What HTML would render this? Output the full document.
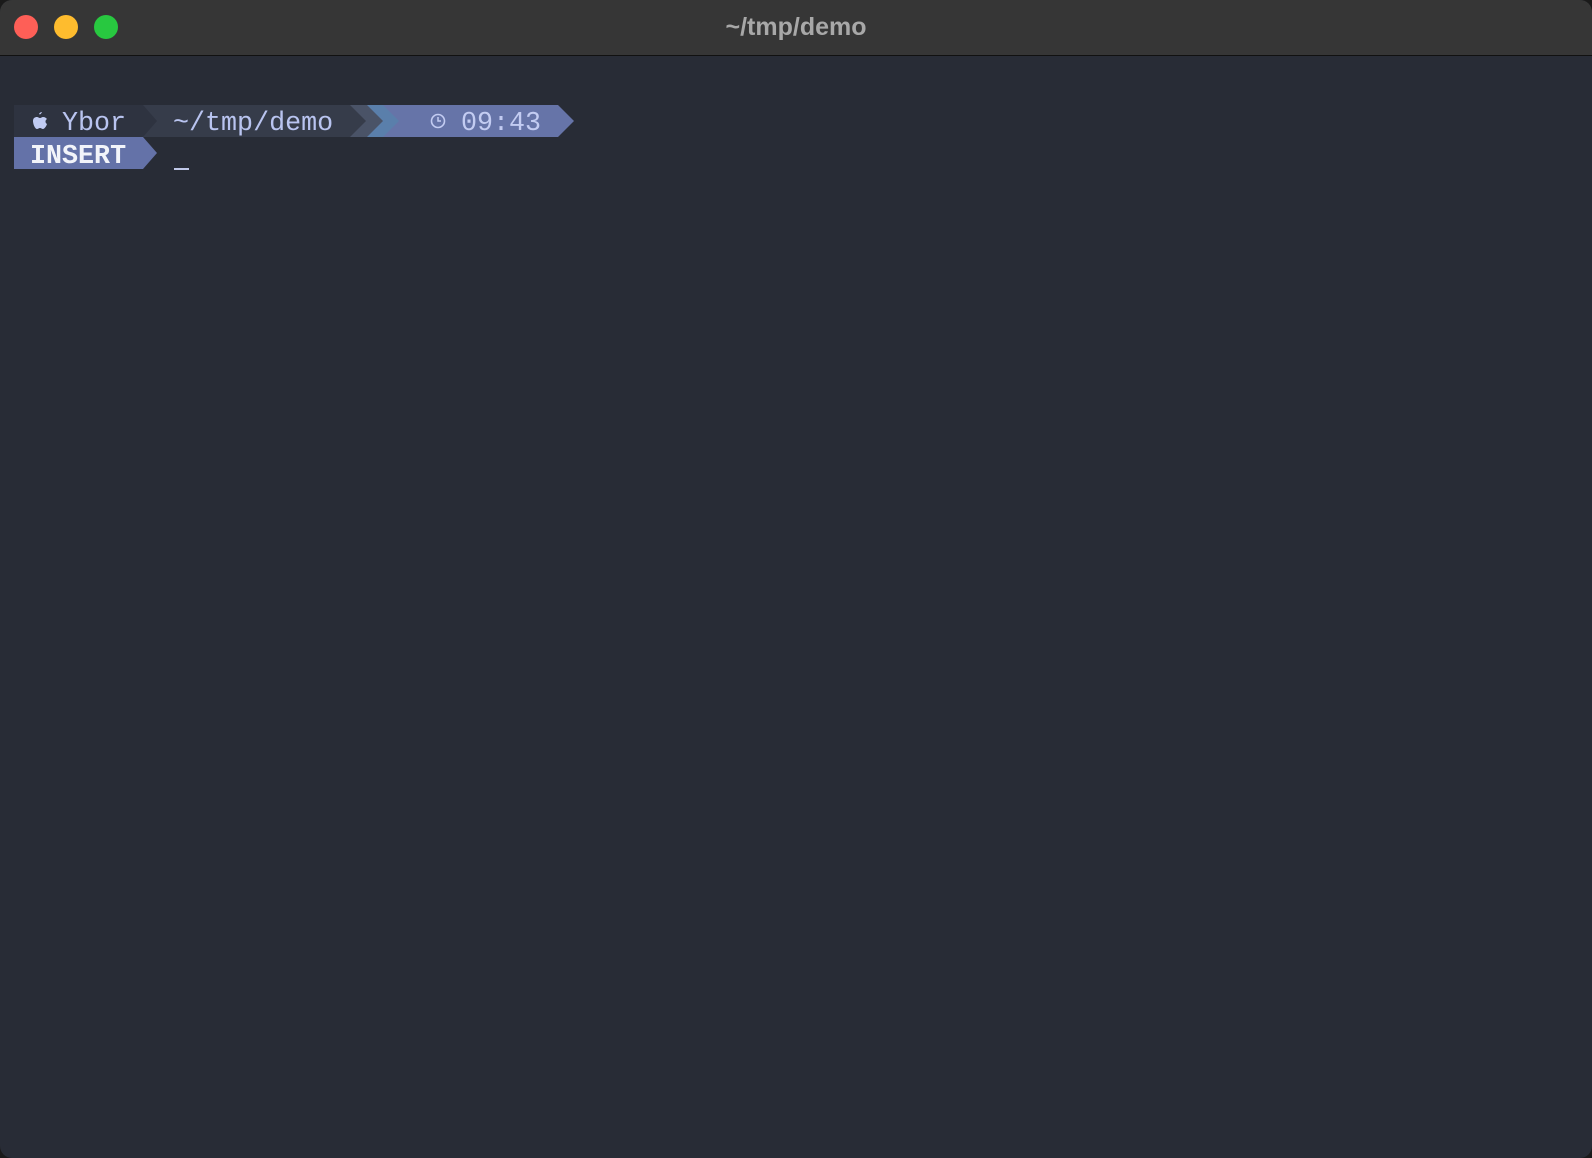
<!DOCTYPE html>
<html><head><meta charset="utf-8"><style>
html,body{margin:0;padding:0;background:#1a1a1a;width:1592px;height:1158px;overflow:hidden}
.win{position:absolute;left:0;top:0;width:1592px;height:1158px;border-radius:12px;overflow:hidden;background:#282c36}
.tb{position:absolute;left:0;top:0;width:1592px;height:55px;background:#363636;border-bottom:1px solid #111}
.dot{position:absolute;top:15px;width:24px;height:24px;border-radius:50%}
.title{position:absolute;top:0;left:0;width:1592px;text-align:center;color:#a8a8a8;font:bold 25px "Liberation Sans",sans-serif;line-height:55px}
svg{position:absolute;left:0;top:0}
.t{font-family:"Liberation Mono","DejaVu Sans Mono",monospace;font-size:26.7px}
</style></head><body><div class="win">
<div class="tb"><div class="dot" style="left:14px;background:#fe5f57"></div><div class="dot" style="left:54px;background:#febc2e"></div><div class="dot" style="left:94px;background:#28c840"></div>
<div class="title">~/tmp/demo</div></div>
<svg width="1592" height="1158">
<polygon points="383,105 558,105 574,121 558,137 383,137" fill="#6674a8"/>
<polygon points="360,105 383,105 399,121 383,137 360,137" fill="#5a7fab"/>
<polygon points="345,105 367,105 383,121 367,137 345,137" fill="#4a5367"/>
<polygon points="142,105 350,105 366,121 350,137 142,137" fill="#363c4a"/>
<polygon points="14,105 143,105 157,121 143,137 14,137" fill="#2e3340"/>
<polygon points="14,137 143,137 157,153 143,169 14,169" fill="#6472a8"/>
<path d="M39,114c1-2 3-2 3-2-1 2-2 3-3 2z M33,121c0-3 2-4 4-4 1 0 2 1 3 1s2-1 3-1c2 0 3 1 4 2-2 1-2 4 0 5-1 3-3 5-4 5s-2-1-3-1-2 1-3 1c-2 0-4-5-4-8z" fill="#c0cbf2"/>
<text class="t" x="62" y="130" fill="#b9c4f0">Ybor</text>
<text class="t" x="173" y="130" fill="#b9c4f0">~/tmp/demo</text>
<circle cx="438" cy="121" r="6.5" fill="none" stroke="#c3ccf2" stroke-width="1.6"/>
<path d="M438,117v4h3" fill="none" stroke="#c3ccf2" stroke-width="1.5"/>
<text class="t" x="461" y="130" fill="#c3ccf2">09:43</text>
<text class="t" x="30" y="163" fill="#f2f4fa" font-weight="bold">INSERT</text>
<rect x="174" y="168" width="15" height="2" fill="#c0c8e8"/>
</svg>
</div></body></html>
